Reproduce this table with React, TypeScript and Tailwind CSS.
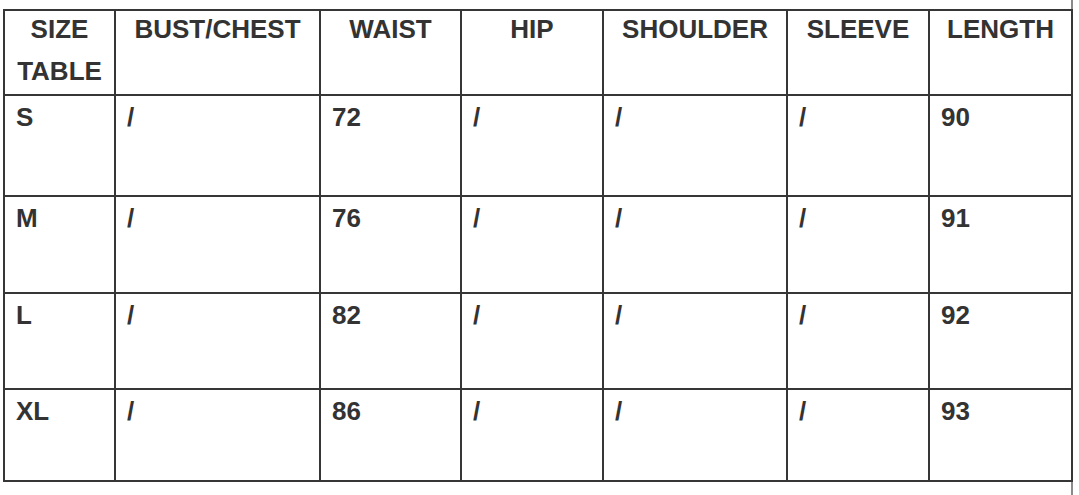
const headers = [
  ['SIZE', 'TABLE'],
  ['BUST/CHEST'],
  ['WAIST'],
  ['HIP'],
  ['SHOULDER'],
  ['SLEEVE'],
  ['LENGTH'],
];

const rows = [
  ['S', '/', '72', '/', '/', '/', '90'],
  ['M', '/', '76', '/', '/', '/', '91'],
  ['L', '/', '82', '/', '/', '/', '92'],
  ['XL', '/', '86', '/', '/', '/', '93'],
];

export default function App() {
  return (
    <div
      className="relative w-[1079px] h-[495px] overflow-hidden bg-white pt-[9px] pl-[3px] text-[#333]"
      style={{ fontFamily: '"Liberation Sans", Arial, sans-serif' }}
    >
      <div className="absolute top-0 bottom-0 left-[1071px] w-[2px] bg-[#8a8a8a]" />
      <div className="relative grid w-fit grid-cols-[109px_203px_139px_140px_182px_140px_141px] grid-rows-[83px_99px_95px_94px_90px] gap-[2px] bg-[#363636] p-[2px]">
        {headers.map((lines, i) => (
          <div key={i} className="bg-white">
            <div className="-mt-[3px] text-center text-[26px] font-bold leading-[42px]">
              {lines.map((l) => (
                <div key={l}>{l}</div>
              ))}
            </div>
          </div>
        ))}
        {rows.map((row, r) =>
          row.map((cell, c) => (
            <div key={`${r}-${c}`} className="bg-white pl-[11px] text-[26px] font-bold leading-[42px]">
              {cell}
            </div>
          ))
        )}
      </div>
    </div>
  );
}
